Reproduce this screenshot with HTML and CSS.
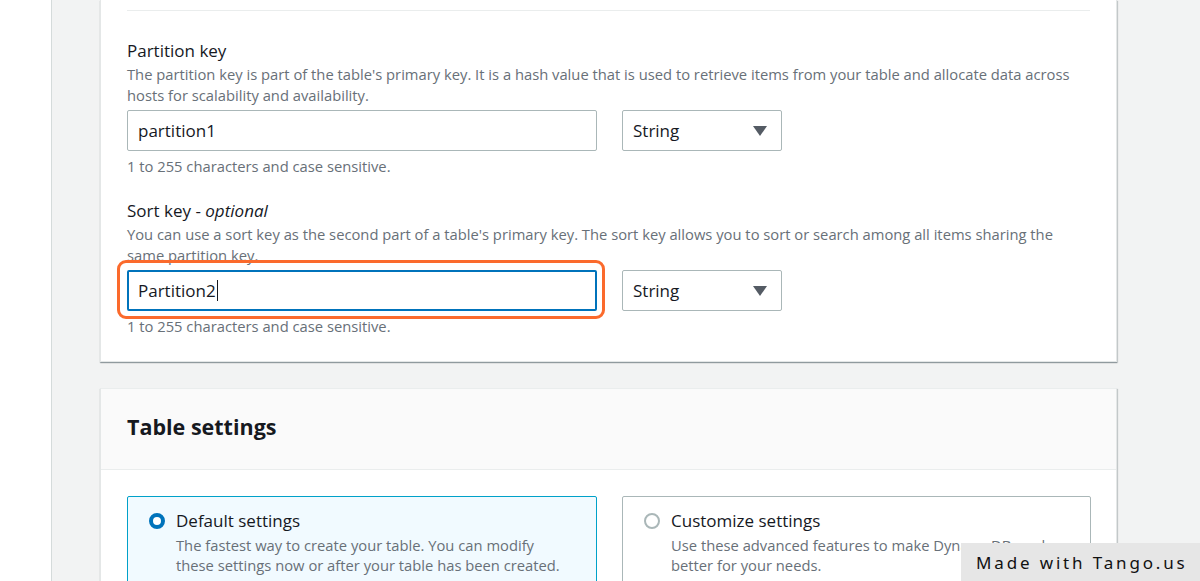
FILE: index.html
```html
<!DOCTYPE html>
<html lang="en">
<head>
<meta charset="utf-8">
<title>Create table</title>
<link rel="stylesheet" href="styles.css">
</head>
<body>
<div class="layout">
  <aside class="side"></aside>
  <main class="main">
    <section class="card card-keys">
      <hr class="divider">
      <div class="field">
        <div class="label">Partition key</div>
        <div class="desc">The partition key is part of the table's primary key. It is a hash value that is used to retrieve items from your table and allocate data across hosts for scalability and availability.</div>
        <div class="row">
          <div class="input">partition1</div>
          <div class="select"><span>String</span><span class="caret-down"></span></div>
        </div>
        <div class="constraint">1 to 255 characters and case sensitive.</div>
      </div>
      <div class="field field-sort">
        <div class="label">Sort key - <i>optional</i></div>
        <div class="desc">You can use a sort key as the second part of a table's primary key. The sort key allows you to sort or search among all items sharing the same partition key.</div>
        <div class="row">
          <div class="input-wrap">
            <div class="input input-focus">Partition2<span class="cursor"></span></div>
            <div class="highlight"></div>
          </div>
          <div class="select"><span>String</span><span class="caret-down"></span></div>
        </div>
        <div class="constraint">1 to 255 characters and case sensitive.</div>
      </div>
    </section>

    <section class="card card-settings">
      <header class="card-header"><h2>Table settings</h2></header>
      <div class="card-body">
        <div class="tiles">
          <div class="tile tile-selected">
            <span class="radio radio-on"></span>
            <div class="tile-text">
              <div class="tile-label">Default settings</div>
              <div class="tile-desc">The fastest way to create your table. You can modify these settings now or after your table has been created.</div>
            </div>
          </div>
          <div class="tile">
            <span class="radio"></span>
            <div class="tile-text">
              <div class="tile-label">Customize settings</div>
              <div class="tile-desc">Use these advanced features to make DynamoDB work better for your needs.</div>
            </div>
          </div>
        </div>
      </div>
    </section>
  </main>
</div>
<div class="tango">Made with Tango.us</div>
</body>
</html>
```

FILE: styles.css
```css
* { box-sizing: border-box; }
html, body { margin: 0; padding: 0; }
body {
  font-family: "Open Sans", "Noto Sans", sans-serif;
  color: #16191f;
  background: #f2f3f3;
  width: 1200px;
  height: 581px;
  overflow: hidden;
}
.layout { display: flex; min-height: 581px; }
.side {
  width: 52px;
  flex: none;
  background: #ffffff;
  border-right: 1px solid #d5dbdb;
}
.main {
  flex: 1;
  padding-left: 48px;
}
.card {
  width: 1017px;
  background: #fff;
  border: 1px solid #e4e7e7;
  border-top: none;
  box-shadow: 0 1px 1px 0 rgba(0,28,36,0.3), 1px 1px 1px 0 rgba(0,28,36,0.15);
}
.card-keys {
  padding: 10px 26px 25px 26px;
}
.divider {
  margin: 0;
  border: none;
  border-top: 1px solid #eaeded;
}
.field { padding-top: 29px; }
.field-sort { padding-top: 24px; }
.label { font-size: 17px; line-height: 22px; color: #16191f; }
.label i { font-style: italic; }
.desc { font-size: 14.75px; line-height: 21px; color: #687078; margin-top: 2px; }
.row {
  display: grid;
  grid-template-columns: 470px 160px;
  column-gap: 25px;
  margin-top: 4px;
}
.input {
  height: 41px;
  border: 1px solid #aab7b8;
  border-radius: 2px;
  padding: 0 10px;
  display: flex;
  align-items: center;
  font-size: 17px;
  color: #16191f;
  background: #fff;
}
.input-wrap { position: relative; }
.input-focus {
  border: 2px solid #0073bb;
  padding: 0 9px;
}
.cursor {
  display: inline-block;
  width: 1px;
  height: 21px;
  background: #16191f;
  margin-left: 1px;
}
.highlight {
  position: absolute;
  top: -10px;
  left: -10px;
  right: -8px;
  bottom: -8px;
  border: 3px solid #fb6a2c;
  border-radius: 9px;
  pointer-events: none;
}
.select {
  height: 41px;
  border: 1px solid #aab7b8;
  border-radius: 2px;
  padding: 0 14px 0 10px;
  display: flex;
  align-items: center;
  justify-content: space-between;
  font-size: 17px;
  color: #16191f;
}
.caret-down {
  width: 0; height: 0;
  border-left: 7px solid transparent;
  border-right: 7px solid transparent;
  border-top: 10px solid #545b64;
}
.constraint {
  margin-top: 5px;
  font-size: 14.75px;
  line-height: 20px;
  color: #687078;
}
.card-settings {
  margin-top: 26px;
  border-top: 1px solid #eaeded;
}
.card-header {
  background: #fafafa;
  border-bottom: 1px solid #eaeded;
  padding: 23px 26px 27px;
}
.card-header h2 {
  margin: 0;
  font-size: 21.5px;
  line-height: 30px;
  font-weight: 700;
  color: #16191f;
}
.card-body { padding: 26px 26px 20px; }
.tiles {
  display: grid;
  grid-template-columns: 470px 469px;
  column-gap: 25px;
}
.tile {
  display: flex;
  align-items: flex-start;
  gap: 11px;
  border: 1px solid #aab7b8;
  border-radius: 2px;
  padding: 13px 20px 14px 21px;
  background: #fff;
}
.tile-selected {
  border-color: #00a1c9;
  background: #f1faff;
}
.tile-selected .tile-text { max-width: 390px; }
.radio {
  flex: none;
  width: 16px;
  height: 16px;
  margin-top: 3px;
  border-radius: 50%;
  border: 2px solid #aab7b8;
  background: #fff;
}
.radio-on {
  border: 4px solid #0073bb;
}
.tile-label { font-size: 17px; line-height: 22px; color: #16191f; }
.tile-desc { font-size: 14.75px; line-height: 20px; color: #687078; margin-top: 3px; }
.tango {
  position: absolute;
  left: 961px;
  top: 543px;
  width: 239px;
  height: 38px;
  background: #e6e6e6;
  color: #111;
  font-family: "Noto Sans", sans-serif;
  font-size: 17px;
  letter-spacing: 2.85px;
  display: flex;
  align-items: center;
  padding-left: 15px;
  white-space: nowrap;
}
```
